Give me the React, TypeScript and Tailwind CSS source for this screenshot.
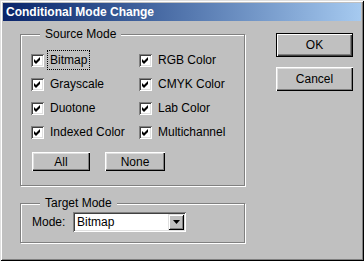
import React from "react";

const font = { fontFamily: '"Liberation Sans", Arial, sans-serif' };

function Check({ label, focus, w }: { label: string; focus?: boolean; w: string }) {
  return (
    <div className={"flex items-center h-[24px] overflow-hidden whitespace-nowrap " + w}>
      <div className="w-[13px] h-[13px] shrink-0 bg-white shadow-[inset_1px_1px_0_#808080,inset_-1px_-1px_0_#fff,inset_2px_2px_0_#404040,inset_-2px_-2px_0_#dfdfdf] flex items-center justify-center">
        <svg width="7" height="7" viewBox="0 0 7 7">
          <path d="M0 2 L2 4 L6 0 L6 3 L2 7 L0 5 Z" fill="#000" />
        </svg>
      </div>
      <span
        className={
          "ml-[4px] px-[2px] py-[1px] text-[12px] leading-[16px] text-black " +
          (focus ? "outline outline-1 outline-dotted outline-black" : "")
        }
      >
        {label}
      </span>
    </div>
  );
}

function Btn({ label, w, h, def }: { label: string; w: string; h: string; def?: boolean }) {
  return (
    <div
      className={
        w +
        " " +
        h +
        " flex items-center justify-center text-[12px] text-black bg-[#c0c0c0] " +
        (def
          ? "border border-black shadow-[inset_1px_1px_0_#fff,inset_-1px_-1px_0_#404040,inset_-2px_-2px_0_#808080]"
          : "shadow-[inset_1px_1px_0_#fff,inset_-1px_-1px_0_#000,inset_-2px_-2px_0_#808080,inset_2px_2px_0_#dfdfdf]")
      }
    >
      {label}
    </div>
  );
}

function Group({ title, className, children }: { title: string; className: string; children: React.ReactNode }) {
  return (
    <div
      className={
        "relative border border-[#808080] shadow-[inset_1px_1px_0_#fff,1px_1px_0_#fff] " + className
      }
    >
      <span className="absolute left-[19px] top-[-8px] px-[5px] bg-[#c0c0c0] text-[12px] leading-[14px] text-black">
        {title}
      </span>
      {children}
    </div>
  );
}

export default function App() {
  return (
    <div
      style={font}
      className="w-[364px] h-[261px] bg-[#c0c0c0] p-[3px] flex flex-col shadow-[inset_1px_1px_0_#dfdfdf,inset_-1px_-1px_0_#000,inset_2px_2px_0_#fff,inset_-2px_-2px_0_#808080]"
    >
      <div className="h-[18px] flex items-center pl-[3px] bg-gradient-to-r from-[#0a246a] to-[#a6caf0] text-white font-bold text-[12px]">
        Conditional Mode Change
      </div>
      <div className="flex">
        <div className="ml-[17px] w-[225px] flex flex-col">
          <Group title="Source Mode" className="mt-[13px] h-[152px] pl-[10px] pt-[13px]">
            <div className="grid grid-cols-[108px_90px]">
              <Check label="Bitmap" focus w="w-[103px]" />
              <Check label="RGB Color" w="w-[90px]" />
              <Check label="Grayscale" w="w-[103px]" />
              <Check label="CMYK Color" w="w-[90px]" />
              <Check label="Duotone" w="w-[103px]" />
              <Check label="Lab Color" w="w-[90px]" />
              <Check label="Indexed Color" w="w-[103px]" />
              <Check label="Multichannel" w="w-[90px]" />
            </div>
            <div className="flex gap-[15px] mt-[8px] ml-[1px]">
              <Btn label="All" w="w-[58px]" h="h-[19px]" />
              <Btn label="None" w="w-[60px]" h="h-[19px]" />
            </div>
          </Group>
          <Group title="Target Mode" className="mt-[17px] h-[40px] pl-[11px] pt-[8px]">
            <div className="flex items-center">
              <span className="text-[12px] text-black w-[41px]">Mode:</span>
              <div className="w-[113px] h-[20px] bg-white flex items-center shadow-[inset_1px_1px_0_#808080,inset_-1px_-1px_0_#fff,inset_2px_2px_0_#404040,inset_-2px_-2px_0_#dfdfdf] p-[2px]">
                <span className="flex-1 pl-[2px] text-[12px] text-black">Bitmap</span>
                <div className="w-[16px] h-[16px] bg-[#c0c0c0] flex items-center justify-center shadow-[inset_1px_1px_0_#dfdfdf,inset_-1px_-1px_0_#000,inset_2px_2px_0_#fff,inset_-2px_-2px_0_#808080]">
                  <svg width="7" height="4" viewBox="0 0 7 4">
                    <path d="M0 0 H7 L3.5 4 Z" fill="#000" />
                  </svg>
                </div>
              </div>
            </div>
          </Group>
        </div>
        <div className="ml-[31px] mt-[12px] flex flex-col gap-[10px]">
          <Btn label="OK" w="w-[77px]" h="h-[24px]" def />
          <Btn label="Cancel" w="w-[77px]" h="h-[24px]" />
        </div>
      </div>
    </div>
  );
}
